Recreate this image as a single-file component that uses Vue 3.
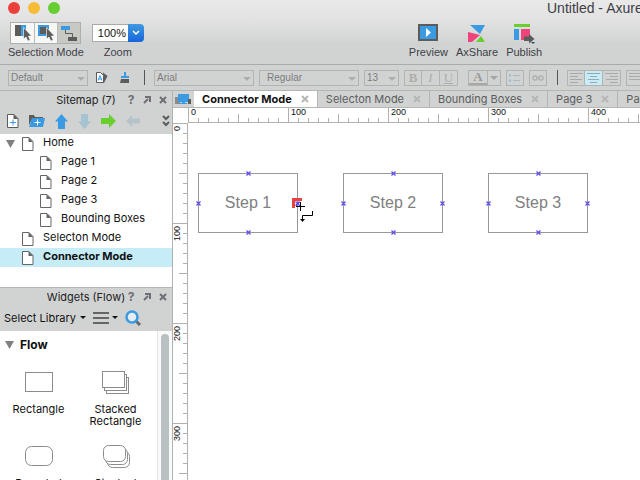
<script setup>
import { ref } from 'vue'

const zoomLevel = ref('100%')

const pages = [
  { name: 'Home', level: 0, open: true },
  { name: 'Page 1', level: 1 },
  { name: 'Page 2', level: 1 },
  { name: 'Page 3', level: 1 },
  { name: 'Bounding Boxes', level: 1 },
  { name: 'Selecton Mode', level: 0 },
  { name: 'Connector Mode', level: 0, current: true },
]

const tabs = [
  { name: 'Connector Mode', active: true },
  { name: 'Selecton Mode' },
  { name: 'Bounding Boxes' },
  { name: 'Page 3' },
  { name: 'Page' },
]

const rulerMarks = [0, 100, 200, 300, 400]
const rulerMarksDown = [0, 100, 200, 300]

const steps = [
  { name: 'Step 1', x: 10, y: 50 },
  { name: 'Step 2', x: 155, y: 50 },
  { name: 'Step 3', x: 300, y: 50 },
]
</script>

<template>
  <div class="app">
    <header class="titlebar">
      <div class="window-row">
        <div class="lights">
          <button class="light red" aria-label="Close"></button>
          <button class="light yellow" aria-label="Minimize"></button>
          <button class="light green" aria-label="Full screen"></button>
        </div>
        <h1>Untitled - Axure</h1>
      </div>

      <div class="main-tools">
        <div class="tool">
          <div class="modes">
            <button class="mode" aria-label="Select intersected">
              <svg width="22" height="20" viewBox="0 0 22 20">
                <rect x="3" y="2" width="6" height="11" fill="#5c5c5c" />
                <rect x="9" y="2" width="5" height="11" fill="#3a9be2" />
                <path d="M11.500 4.500v11.500l2.500-2 1.800 4 2.400-1-1.800-4h3.200z" fill="#5c5c5c" stroke="#fff" stroke-width=".6" />
              </svg>
            </button>
            <button class="mode" aria-label="Select contained">
              <svg width="22" height="20" viewBox="0 0 22 20">
                <rect x="3" y="2" width="11" height="11" fill="#3a9be2" />
                <rect x="5" y="4" width="7" height="7" fill="#5c5c5c" />
                <path d="M11.500 4.500v11.500l2.500-2 1.800 4 2.400-1-1.800-4h3.200z" fill="#5c5c5c" stroke="#fff" stroke-width=".6" />
              </svg>
            </button>
            <button class="mode on" aria-label="Connector">
              <svg width="22" height="20" viewBox="0 0 22 20">
                <rect x="3" y="3" width="9" height="4" fill="#3a9be2" />
                <rect x="10" y="14" width="9" height="4" fill="#5c5c5c" />
                <path d="M7.500 7v3.500h7V14" fill="none" stroke="#5c5c5c" />
              </svg>
            </button>
          </div>
          <span class="tool-label">Selection Mode</span>
        </div>

        <div class="tool">
          <div class="combo">
            <input id="zoom" v-model="zoomLevel" type="text" />
            <button aria-label="Zoom levels">
              <svg width="8" height="6" viewBox="0 0 8 6"><path d="M1 1l3 3 3-3" fill="none" stroke="#fff" stroke-width="1.500" /></svg>
            </button>
          </div>
          <label class="tool-label" for="zoom">Zoom</label>
        </div>

        <button class="tool share-start">
          <svg class="tool-icon" width="22" height="20" viewBox="0 0 22 20">
            <rect x="2" y="1" width="18" height="15" fill="#3a9be2" stroke="#5c5c5c" stroke-width="2" />
            <path d="M9 4l5 4.500L9 13z" fill="#fff" />
          </svg>
          <span class="tool-label">Preview</span>
        </button>
        <button class="tool">
          <svg class="tool-icon" width="22" height="20" viewBox="0 0 22 20">
            <path d="M4 1h15l-5 9z" fill="#3a9be2" />
            <path d="M2 8l12 3-8 7H2z" fill="#ee447c" />
            <path d="M15 12l4 6h-9z" fill="#68cf2e" />
          </svg>
          <span class="tool-label">AxShare</span>
        </button>
        <button class="tool">
          <svg class="tool-icon" width="22" height="20" viewBox="0 0 22 20">
            <rect x="1" y="0" width="16" height="3" fill="#68cf2e" />
            <rect x="1" y="5" width="5" height="11" fill="#3a9be2" />
            <rect x="8" y="5" width="9" height="11" fill="#ee447c" />
            <path d="M11 12.500h5V10l5.500 5-5.500 4.500V17h-5z" fill="#5c5c5c" />
            <path d="M18 18h4l-2 2z" fill="#24476e" />
          </svg>
          <span class="tool-label">Publish</span>
        </button>
      </div>
    </header>

    <div class="format-bar">
      <span class="pick style-pick">
        <select aria-label="Style"><option>Default</option></select>
        <svg width="8" height="4" viewBox="0 0 8 4"><path d="M0 0h8L4 4z" fill="#adadab" /></svg>
      </span>
      <button class="plain" aria-label="Style editor">
        <svg width="14" height="14" viewBox="0 0 14 14">
          <path d="M8 1.500l4.500 3.500L9 12H7z" fill="#5c5c5c" />
          <path d="M1.500 1.500h4l3 3v7h-7z" fill="#fff" stroke="#5c5c5c" />
          <path d="M3 9.500l2-5 2 5M3.500 8h3" fill="none" stroke="#3a9be2" />
        </svg>
      </button>
      <button class="plain brush" aria-label="Format painter">
        <svg width="12" height="14" viewBox="0 0 12 14">
          <rect x="5" y="1" width="2" height="5" fill="#3a9be2" />
          <rect x="2" y="5" width="8" height="2" fill="#3a9be2" />
          <path d="M2 8h8v4H1z" fill="#5c5c5c" />
        </svg>
      </button>
      <i class="rule"></i>
      <span class="pick font-pick">
        <select aria-label="Font"><option>Arial</option></select>
        <svg width="8" height="4" viewBox="0 0 8 4"><path d="M0 0h8L4 4z" fill="#adadab" /></svg>
      </span>
      <span class="pick weight-pick">
        <select aria-label="Typeface"><option>Regular</option></select>
        <svg width="8" height="4" viewBox="0 0 8 4"><path d="M0 0h8L4 4z" fill="#adadab" /></svg>
      </span>
      <span class="pick size-pick">
        <select aria-label="Font size"><option>13</option></select>
        <svg width="8" height="4" viewBox="0 0 8 4"><path d="M0 0h8L4 4z" fill="#adadab" /></svg>
      </span>
      <span class="group letters">
        <button><b>B</b></button>
        <button><i>I</i></button>
        <button><u>U</u></button>
      </span>
      <span class="group colour letters">
        <button class="fill-letter"><b>A</b></button>
        <button aria-label="Text colours">
          <svg width="8" height="4" viewBox="0 0 8 4"><path d="M0 0h8L4 4z" fill="#a4a4a2" /></svg>
        </button>
      </span>
      <span class="group">
        <button aria-label="Bullets">
          <svg width="12" height="10" viewBox="0 0 12 10"><path d="M0 2.500h2M0 7.500h2" stroke="#8ebcd8" stroke-width="2" /><path d="M4 2.500h7M4 7.500h7" stroke="#a6bac6" /></svg>
        </button>
      </span>
      <span class="group">
        <button aria-label="Insert link">
          <svg width="12" height="8" viewBox="0 0 12 8"><rect x="1" y="2" width="4" height="4" rx="1.500" fill="none" stroke="#b0b0ae" stroke-width="1.500" /><rect x="7" y="2" width="4" height="4" rx="1.500" fill="none" stroke="#b0b0ae" stroke-width="1.500" /><path d="M4 4h4" stroke="#b0b0ae" /></svg>
        </button>
      </span>
      <i class="rule aligned"></i>
      <span class="group">
        <button aria-label="Align left">
          <svg width="13" height="12" viewBox="0 0 13 12"><path d="M0 1.500h13M0 4.500h8M0 7.500h12M0 10.500h8" stroke="#a8aaaa" /></svg>
        </button>
        <button class="lit" aria-label="Align centre">
          <svg width="13" height="12" viewBox="0 0 13 12"><path d="M0 1.500h13M3 4.500h7M1 7.500h11M3 10.500h7" stroke="#93a9b4" /></svg>
        </button>
        <button aria-label="Align right">
          <svg width="13" height="12" viewBox="0 0 13 12"><path d="M0 1.500h13M5 4.500h8M1 7.500h12M5 10.500h8" stroke="#a8aaaa" /></svg>
        </button>
      </span>
      <span class="group">
        <button aria-label="Align top">
          <svg width="13" height="12" viewBox="0 0 13 12"><path d="M0 1.500h13M0 4.500h13M0 7.500h13" stroke="#a8aaaa" /></svg>
        </button>
      </span>
    </div>

    <div class="workspace">
      <aside class="sidebar">
        <section class="sitemap">
          <div class="panel-title">
            <h2>Sitemap (7)</h2>
            <div class="panel-buttons">
              <button aria-label="Help"><b>?</b></button>
              <button aria-label="Detach">
                <svg width="8" height="8" viewBox="0 0 8 8"><path d="M1 7l4-4M2 1h5v5" fill="none" stroke="#6e6e74" stroke-width="2" /></svg>
              </button>
              <button aria-label="Close panel">
                <svg width="8" height="8" viewBox="0 0 8 8"><path d="M1 1l6 6M7 1L1 7" stroke="#6e6e74" stroke-width="2" /></svg>
              </button>
            </div>
          </div>
          <div class="page-tools">
            <button aria-label="Add page">
              <svg width="12" height="16" viewBox="0 0 12 16">
                <path d="M.500 1.500h6.500l4 4v9H.500z" fill="#fff" stroke="#5c5c5c" /><path d="M6.500 1v5H11z" fill="#5c5c5c" />
                <path d="M3 9.500h6M6 6.500v6" stroke="#3a9be2" />
              </svg>
            </button>
            <button aria-label="Add folder">
              <svg width="16" height="14" viewBox="0 0 16 14">
                <path d="M0 1h5l1 2h8v2H3l-3 6z" fill="#5c5c5c" />
                <path d="M3 4h13l-2 9H0z" fill="#3a9be2" />
                <path d="M5.500 8.500h6M8.500 5.500v6" stroke="#fff" />
              </svg>
            </button>
            <button aria-label="Move up">
              <svg width="13" height="15" viewBox="0 0 13 15"><path d="M6.500 0L13 7.500h-3V15H3V7.500H0z" fill="#3a9be2" /></svg>
            </button>
            <button aria-label="Move down">
              <svg width="13" height="15" viewBox="0 0 13 15"><path d="M6.500 15L13 7.500h-3V0H3v7.500H0z" fill="#a6c3d1" /></svg>
            </button>
            <button aria-label="Indent">
              <svg width="15" height="14" viewBox="0 0 15 14"><path d="M0 4h8V0l7 7-7 7v-4H0z" fill="#68cf2e" /></svg>
            </button>
            <button aria-label="Outdent">
              <svg width="14" height="12" viewBox="0 0 14 12"><path d="M14 3.500H6V0L0 6l6 6V8.500h8z" fill="#b5c4ca" /></svg>
            </button>
            <button class="more" aria-label="More">
              <svg width="8" height="12" viewBox="0 0 8 12"><path d="M1 1l3 3 3-3M1 7l3 3 3-3" fill="none" stroke="#5c5c5c" stroke-width="2" /></svg>
            </button>
          </div>
          <ul class="tree">
            <li v-for="page in pages" :key="page.name" :class="{ child: page.level, current: page.current }">
              <span class="twist">
                <svg v-if="page.open" width="10" height="8" viewBox="0 0 10 8"><path d="M0 0h9L4.500 8z" fill="#808080" /></svg>
              </span>
              <svg width="12" height="16" viewBox="0 0 12 16">
                <path d="M.500 1.500h6.500l4 4v9H.500z" fill="#fff" stroke="#666" />
                <path d="M6.500 1v5H11z" fill="#666" />
              </svg>
              <a href="#">{{ page.name }}</a>
            </li>
          </ul>
        </section>

        <section class="widgets">
          <div class="panel-title">
            <h2>Widgets (Flow)</h2>
            <div class="panel-buttons">
              <button aria-label="Help"><b>?</b></button>
              <button aria-label="Detach">
                <svg width="8" height="8" viewBox="0 0 8 8"><path d="M1 7l4-4M2 1h5v5" fill="none" stroke="#6e6e74" stroke-width="2" /></svg>
              </button>
              <button aria-label="Close panel">
                <svg width="8" height="8" viewBox="0 0 8 8"><path d="M1 1l6 6M7 1L1 7" stroke="#6e6e74" stroke-width="2" /></svg>
              </button>
            </div>
          </div>
          <div class="library-tools">
            <button>Select Library
              <svg width="6" height="4" viewBox="0 0 6 4"><path d="M0 0h6L3 3z" fill="#111" /></svg>
            </button>
            <button class="menu" aria-label="Library options">
              <svg width="16" height="14" viewBox="0 0 16 14"><path d="M0 2h16M0 7h16M0 12h16" stroke="#666" stroke-width="2" /></svg>
              <svg width="6" height="4" viewBox="0 0 6 4"><path d="M0 0h6L3 3z" fill="#111" /></svg>
            </button>
            <button aria-label="Search widgets">
              <svg width="16" height="16" viewBox="0 0 16 16">
                <path d="M11 11l4 4" stroke="#666" stroke-width="3" />
                <circle cx="7" cy="7" r="5.500" fill="#e8edf0" stroke="#3a9be2" stroke-width="2.500" />
              </svg>
            </button>
          </div>
          <div class="library">
            <div class="library-list">
              <h3>
                <svg width="9" height="8" viewBox="0 0 9 8"><path d="M0 0h9L4.500 8z" fill="#808080" /></svg>
                Flow
              </h3>
              <div class="shapes">
                <figure>
                  <svg width="28" height="24" viewBox="0 0 28 24"><rect x=".5" y="1.500" width="27" height="19" fill="#fff" stroke="#8c8c8c" /></svg>
                  <figcaption>Rectangle</figcaption>
                </figure>
                <figure>
                  <svg width="28" height="24" viewBox="0 0 28 24" fill="#fff" stroke="#8c8c8c">
                    <rect x="4.500" y="6.500" width="22" height="16" />
                    <rect x="2.500" y="3.500" width="22" height="16" />
                    <rect x=".5" y=".5" width="22" height="16" />
                  </svg>
                  <figcaption>Stacked Rectangle</figcaption>
                </figure>
                <figure>
                  <svg width="28" height="24" viewBox="0 0 28 24"><rect x=".5" y="1.500" width="27" height="19" rx="6" fill="#fff" stroke="#8c8c8c" /></svg>
                  <figcaption>Rounded</figcaption>
                </figure>
                <figure>
                  <svg width="28" height="24" viewBox="0 0 28 24" fill="#fff" stroke="#8c8c8c">
                    <rect x="5.500" y="6.500" width="22" height="16" rx="5" />
                    <rect x="3.500" y="3.500" width="22" height="16" rx="5" />
                    <rect x="1.500" y=".5" width="22" height="16" rx="5" />
                  </svg>
                  <figcaption>Stacked</figcaption>
                </figure>
              </div>
            </div>
            <div class="scroll-track"><div class="thumb"></div></div>
          </div>
        </section>
      </aside>

      <main class="editor">
        <nav class="tabs">
          <button class="tab-tool" aria-label="Page views">
            <svg width="17" height="12" viewBox="0 0 17 12">
              <rect x="0" y="4" width="5" height="7" fill="#8a8a8a" />
              <path d="M3 1h11v8h-4v2H7V9H3z" fill="#3a9be2" />
              <rect x="4" y="10" width="8" height="1" fill="#3a9be2" />
              <rect x="13" y="6" width="3" height="5" fill="#5c5c5c" />
            </svg>
          </button>
          <div v-for="(tab, i) in tabs" :key="i" class="tab" :class="{ active: tab.active }">
            <a href="#">{{ tab.name }}</a>
            <button :aria-label="'Close ' + tab.name">
              <svg width="8" height="8" viewBox="0 0 8 8"><path d="M1 1l6 6M7 1L1 7" stroke="#b6b6b4" stroke-width="2" /></svg>
            </button>
          </div>
        </nav>
        <div class="stage">
          <div class="corner"></div>
          <div class="ruler across">
            <span v-for="mark in rulerMarks" :key="mark">{{ mark }}</span>
          </div>
          <div class="ruler down">
            <span v-for="mark in rulerMarksDown" :key="mark">{{ mark }}</span>
          </div>
          <div class="canvas">
            <div v-for="step in steps" :key="step.name" class="step" :style="{ left: step.x + 'px', top: step.y + 'px' }">
              {{ step.name }}
              <svg v-for="side in ['top', 'right', 'bottom', 'left']" :key="side" class="port" :class="side" width="5" height="5" viewBox="0 0 5 5">
                <path d="M.500.500l4 4M4.500.500l-4 4" stroke="#5a48f0" stroke-width="1.200" />
              </svg>
            </div>
            <svg class="cursor" width="24" height="26" viewBox="0 0 24 26">
              <path d="M0 0h10v3H3v7H0z" fill="#ea4040" />
              <path d="M4 4l4 4M8 4l-4 4" stroke="#5a48f0" />
              <path d="M4 8.500h9M8.500 4v9" stroke="#000" />
              <path d="M20.500 13v4.500h-10V22" fill="none" stroke="#000" />
              <path d="M8 21h5l-2.500 3z" fill="#000" />
            </svg>
          </div>
        </div>
      </main>
    </div>
  </div>
</template>

<style>
body {
  margin: 0;
  overflow: hidden;
}
</style>

<style scoped>
.app {
  display: flex;
  flex-direction: column;
  height: 100vh;
  overflow: hidden;
  background: #fff;
  color: #111;
  font-family: Inter, "Liberation Sans", sans-serif;
  font-size: 11px;
  line-height: 14px;
}

.app * {
  box-sizing: border-box;
}

svg {
  display: block;
  flex: none;
}

button {
  display: flex;
  align-items: center;
  justify-content: center;
  padding: 0;
  border: 0;
  background: none;
  color: inherit;
  font: inherit;
}

a {
  color: inherit;
  text-decoration: none;
}

h1,
h2,
h3,
ul,
figure {
  margin: 0;
  padding: 0;
  font-size: inherit;
}

.titlebar {
  flex: none;
  height: 65px;
  border-bottom: 1px solid #a9abab;
  background: linear-gradient(#e9e9e9, #e2e2e2 20px, #d1d3d3 44px, #d1d3d3);
  color: #3e3e46;
  font-family: "Liberation Sans", sans-serif;
}

.window-row {
  display: flex;
  align-items: center;
  justify-content: space-between;
  height: 16px;
  padding-left: 8px;
  overflow: hidden;
}

.lights {
  display: flex;
  gap: 8px;
}

.light {
  width: 12px;
  height: 12px;
  border-radius: 50%;
}

.red { background: #ea3f3b; }
.yellow { background: #f7bb35; }
.green { background: #66ce30; }

h1 {
  width: 93px;
  font-size: 14px;
  font-weight: 400;
  line-height: 16px;
  white-space: nowrap;
}

.main-tools {
  display: flex;
  gap: 8px;
  padding: 6px 8px 0;
}

.tool {
  display: flex;
  flex-direction: column;
  align-items: center;
  justify-content: flex-start;
  height: 37px;
}

.share-start {
  margin-left: 257px;
}

.tool-icon {
  margin-top: 2px;
}

.tool-label {
  margin-top: auto;
  line-height: 14px;
  white-space: nowrap;
}

.modes {
  display: flex;
  border: 1px solid #aeb0ae;
}

.mode {
  width: 23px;
  height: 20px;
  background: #f7f7f5;
}

.mode + .mode {
  border-left: 1px solid #b9bbb9;
}

.mode.on {
  background: #c9c9c3;
}

.combo {
  display: flex;
  height: 18px;
  margin-top: 2px;
}

.combo input {
  width: 36px;
  padding: 0 0 0 5px;
  border: 1px solid #aaa;
  border-right: 0;
  background: #fff;
  color: #111;
  font: 11px "Liberation Sans", sans-serif;
}

.combo button {
  width: 16px;
  border-radius: 0 4px 4px 0;
  background: linear-gradient(#4199df, #1765dc);
}

.format-bar {
  display: flex;
  flex: none;
  align-items: center;
  gap: 5px;
  height: 26px;
  padding-left: 8px;
  overflow: hidden;
  border-bottom: 1px solid #b4b6b6;
  background: #d1d3d3;
}

.pick {
  display: flex;
  position: relative;
  flex: none;
  height: 16px;
}

.pick select {
  width: 100%;
  padding: 0 2px;
  border: 1px solid #b2b4b2;
  border-radius: 0;
  appearance: none;
  background: none;
  color: #7a7c7c;
  font: 10px "Liberation Sans", sans-serif;
}

.pick svg {
  position: absolute;
  top: 7px;
  right: 3px;
  pointer-events: none;
}

.style-pick { width: 80px; }
.font-pick,
.weight-pick { width: 100px; }
.weight-pick select { padding-left: 7px; }
.size-pick { width: 35px; }

.plain {
  flex: none;
  margin-left: 2px;
}

.brush {
  margin-left: 5px;
}

.rule {
  flex: none;
  width: 1px;
  height: 15px;
  margin: 0 4px 0 8px;
  background: #555;
}

.rule.aligned {
  margin-left: 5px;
}

.group {
  display: flex;
  flex: none;
  height: 16px;
  border: 1px solid #b2b4b2;
}

.group button {
  width: 16px;
}

.group button + button {
  width: 18px;
  border-left: 1px solid #b2b4b2;
}

.letters {
  color: #adadaa;
  font: 13px "Liberation Serif", serif;
}

.colour {
  margin-left: 5px;
}

.colour .fill-letter {
  width: 18px;
  border-bottom: 2px solid #a8a8a4;
  color: #9a9a98;
}

.colour button + button {
  width: 13px;
}

.group .lit {
  background: #c8ebf8;
}

.workspace {
  display: flex;
  flex: 1;
  min-height: 0;
}

.sidebar {
  display: flex;
  flex: none;
  flex-direction: column;
  width: 173px;
  border-right: 1px solid #b0b2b2;
}

.panel-title {
  display: grid;
  grid-template-columns: 1fr auto 1fr;
  align-items: center;
  height: 17px;
  background: #d1d3d3;
  color: #6e6e74;
}

.panel-title h2 {
  grid-column: 2;
  color: #222;
  font-weight: 400;
}

.panel-buttons {
  display: flex;
  align-items: center;
  justify-content: flex-end;
  gap: 8px;
  padding-right: 5px;
}

.panel-buttons b {
  width: 8px;
  font-size: 12px;
}

.page-tools {
  display: flex;
  align-items: center;
  gap: 10px;
  height: 26px;
  padding: 0 2px 0 7px;
  background: #d1d3d3;
}

.page-tools .more {
  margin-left: auto;
}

.tree {
  height: 153px;
  list-style: none;
}

.tree li {
  display: flex;
  align-items: center;
  height: 19px;
  padding-left: 6px;
}

.tree .child {
  padding-left: 24px;
}

.tree a {
  margin-left: 9px;
  padding-bottom: 3px;
}

.tree .current {
  background: #c6ecf8;
  font-weight: 700;
}

.twist {
  width: 16px;
}

.widgets {
  display: flex;
  flex: 1;
  flex-direction: column;
  min-height: 0;
  border-top: 1px solid #b4b6b6;
}

.library-tools {
  display: flex;
  flex: none;
  align-items: center;
  gap: 7px;
  height: 26px;
  padding-left: 4px;
  background: #d1d3d3;
}

.library-tools button {
  gap: 4px;
  white-space: nowrap;
}

.library-tools .menu {
  gap: 3px;
}

.library {
  display: flex;
  flex: 1;
  min-height: 0;
}

.library-list {
  flex: 1;
  overflow: hidden;
}

h3 {
  display: flex;
  align-items: center;
  gap: 6px;
  padding: 6px 0 0 5px;
  font-size: 12px;
  line-height: 16px;
}

.shapes {
  display: grid;
  grid-template-columns: 1fr 1fr;
  row-gap: 18px;
  padding: 18px 3px 0 0;
}

figure {
  display: flex;
  flex-direction: column;
  align-items: center;
}

figcaption {
  margin-top: 8px;
  line-height: 12px;
  text-align: center;
}

.scroll-track {
  width: 15px;
  padding: 3px 3px 0;
  border-left: 1px solid #e4e4e4;
  background: #fafafa;
}

.thumb {
  height: 100%;
  border-radius: 4px 4px 0 0;
  background: #b9c0c2;
}

.editor {
  display: flex;
  flex: 1;
  flex-direction: column;
  min-width: 0;
}

.tabs {
  display: flex;
  flex: none;
  height: 17px;
  overflow: hidden;
  border-bottom: 1px solid #b4b6b6;
  background: #d1d3d3;
}

.tab-tool {
  flex: none;
  width: 21px;
}

.tab {
  display: flex;
  flex: none;
  align-items: center;
  gap: 9px;
  padding: 0 8px;
  border-right: 1px solid #b4b6b6;
  color: #5c5c5c;
  white-space: nowrap;
}

.tab.active {
  height: 17px;
  padding-bottom: 1px;
  background: #fff;
  color: #111;
  font-weight: 700;
}

.stage {
  display: grid;
  flex: 1;
  grid-template: 15px 1fr / 15px 1fr;
  min-height: 0;
}

.ruler {
  display: flex;
  overflow: hidden;
  font: 9px "Liberation Sans", sans-serif;
  line-height: 9px;
}

.ruler span {
  flex: none;
}

.across {
  border-bottom: 1px solid #b0b0b0;
}

.across span {
  width: 100px;
  padding-left: 3px;
  background:
    linear-gradient(#b0b0b0, #b0b0b0) 0 0 / 1px 100% no-repeat,
    linear-gradient(#b0b0b0, #b0b0b0) 50px 100% / 1px 8px no-repeat,
    linear-gradient(90deg, #b0b0b0 1px, transparent 1px) 0 100% / 10px 4px repeat-x;
}

.down {
  flex-direction: column;
  border-right: 1px solid #b0b0b0;
}

/* Turned half round, so the edges are mirrored: bottom is drawn on top. */
.down span {
  height: 100px;
  padding-bottom: 3px;
  background:
    linear-gradient(#b0b0b0, #b0b0b0) 0 100% / 100% 1px no-repeat,
    linear-gradient(#b0b0b0, #b0b0b0) 0 49px / 8px 1px no-repeat,
    linear-gradient(0deg, #b0b0b0 1px, transparent 1px) 0 0 / 4px 10px repeat-y;
  text-align: end;
  transform: rotate(180deg);
  writing-mode: vertical-rl;
}

.canvas {
  position: relative;
  overflow: hidden;
}

.step {
  display: flex;
  position: absolute;
  align-items: center;
  justify-content: center;
  width: 100px;
  height: 60px;
  border: 1px solid #999;
  color: #808080;
  font: 16px "Liberation Sans", sans-serif;
}

.port {
  position: absolute;
}

.port.top,
.port.bottom { left: calc(50% - 2px); }
.port.left,
.port.right { top: calc(50% - 2px); }
.port.top { top: -3px; }
.port.bottom { bottom: -3px; }
.port.left { left: -3px; }
.port.right { right: -3px; }

.cursor {
  position: absolute;
  top: 75px;
  left: 104px;
}
</style>
